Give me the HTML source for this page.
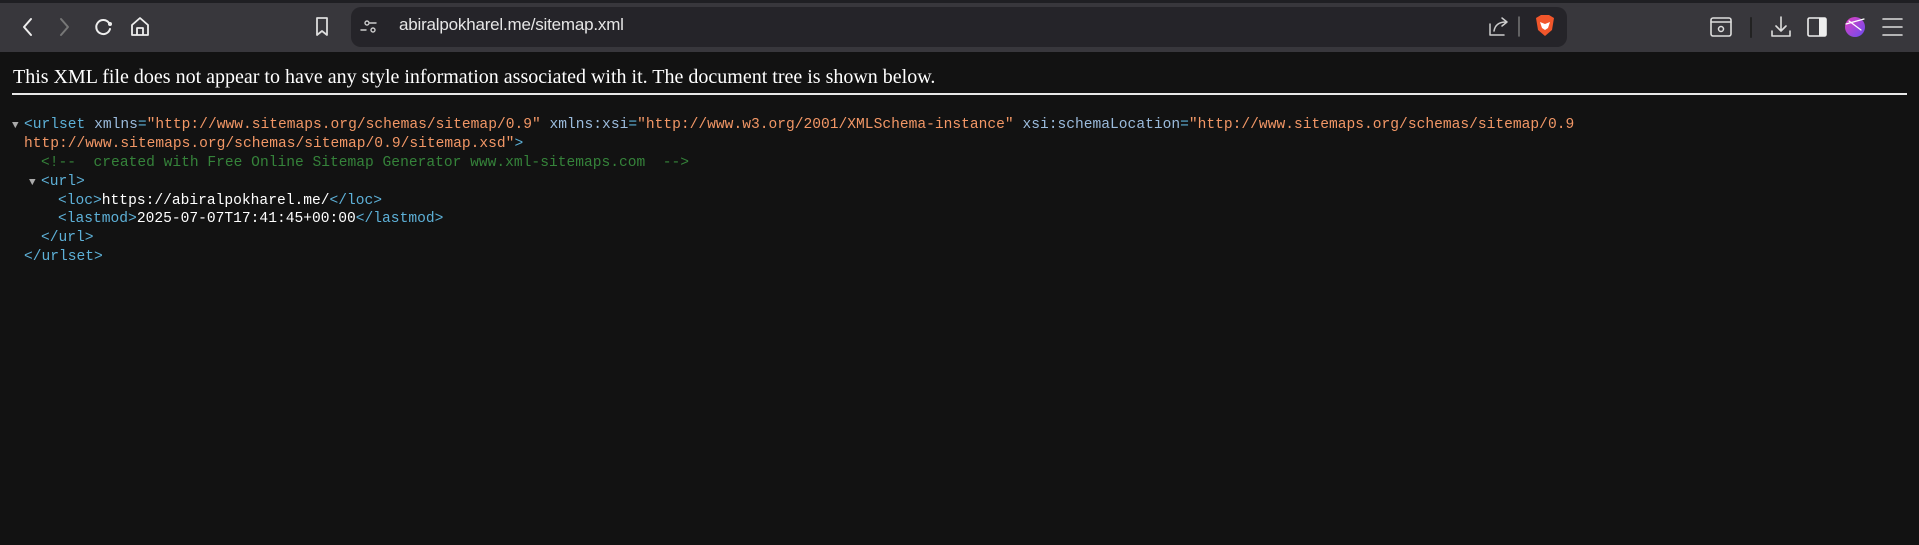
<!DOCTYPE html>
<html><head><meta charset="utf-8"><style>
*{margin:0;padding:0;box-sizing:border-box}
body{width:1919px;height:545px;background:#121212;overflow:hidden;position:relative;font-family:"Liberation Sans",sans-serif}
#top{position:absolute;left:0;top:0;width:1919px;height:3px;background:#1f1f23}
#bar{position:absolute;left:0;top:3px;width:1919px;height:49px;background:#38373c}
#addr{position:absolute;left:351px;top:7px;width:1216px;height:40px;border-radius:10px;background:#252429}
.ic{position:absolute}
#url{position:absolute;left:399px;top:15px;font-size:17px;color:#e6e6e6;letter-spacing:-0.2px}
#msg{position:absolute;left:13px;top:66px;font-family:"Liberation Serif",serif;font-size:20px;color:#fff;white-space:nowrap}
#hr{position:absolute;left:12px;top:93px;width:1895px;height:2px;background:#e8e8e8}
#code{position:absolute;left:0;top:116px;font-family:"Liberation Mono",monospace;font-size:14.6px;line-height:18.9px;color:#fff}
.l{position:relative;height:18.9px;white-space:pre}
.t{color:#5db0d7}.a{color:#9bbbdc}.v{color:#f29766}.c{color:#35833a}
.tri{position:absolute;color:#aaa;font-size:11px}
</style></head><body>
<div id="top"></div><div id="bar"></div><div id="addr"></div>
<svg class="ic" style="left:0;top:0" width="1919" height="52" fill="none" stroke-linecap="round" stroke-linejoin="round">
<path d="M31 19l-7 8 7 8" stroke="#eee" stroke-width="2"/>
<path d="M61 19l7 8-7 8" stroke="#777" stroke-width="2"/>
<path d="M109 23a7 7 0 1 0 1 6" stroke="#eee" stroke-width="2"/><circle cx="110" cy="24" r="2" fill="#eee"/>
<path d="M132 35V25l8-7 8 7v10zM137 35v-7h6v7" stroke="#eee" stroke-width="1.8"/>
<path d="M317 18h10v17l-5-4-5 4z" stroke="#ddd" stroke-width="1.8"/>
<circle cx="367" cy="23" r="2" stroke="#ccc" stroke-width="1.4"/><path d="M370 23h6M366 30h-5" stroke="#ccc" stroke-width="1.4"/><circle cx="373" cy="30" r="2" stroke="#ccc" stroke-width="1.4"/>
<path d="M1490 24v11h14M1494 31c1-6 5-9 12-9M1502 18l5 4-5 4" stroke="#ccc" stroke-width="1.5"/>
<path d="M1519 17v19" stroke="#777" stroke-width="1.5"/>
<path d="M1536 18l5-3h8l5 3-2 12-7 6-7-6z" fill="#f1562b"/><path d="M1540 22l5 2 5-2-2 6-3 2-3-2z" fill="#fff"/>
<rect x="1711" y="18" width="20" height="18" rx="2" stroke="#ddd" stroke-width="1.6"/><path d="M1711 22h20" stroke="#ddd" stroke-width="1.6"/><circle cx="1721" cy="29" r="2.5" stroke="#ddd" stroke-width="1.5"/>
<path d="M1751 18v19" stroke="#222" stroke-width="2"/>
<path d="M1781 17v14M1776 26l5 5 5-5M1772 31v5h18v-5" stroke="#ddd" stroke-width="1.6"/>
<rect x="1808" y="18" width="18" height="18" rx="1.5" stroke="#eee" stroke-width="1.6"/><rect x="1819" y="18" width="7" height="18" fill="#eee"/>
<defs><linearGradient id="g" x1="0" y1="0" x2="1" y2="1"><stop offset="0" stop-color="#e040c0"/><stop offset="1" stop-color="#6a4cf0"/></linearGradient></defs>
<circle cx="1855" cy="27" r="10" fill="url(#g)"/><path d="M1846 24l18-5M1849 21l12 9" stroke="#fff" stroke-width="1.2"/>
<path d="M1883 19h19M1883 27h19M1883 35h19" stroke="#ddd" stroke-width="1.6"/>
</svg>
<div id="url">abiralpokharel.me/sitemap.xml</div>
<div id="msg">This XML file does not appear to have any style information associated with it. The document tree is shown below.</div>
<div id="hr"></div>
<div id="code"><div class="l"><span class="tri" style="left:12px;top:1px">▼</span><span style="position:absolute;left:24px"><span class="t">&lt;urlset</span> <span class="a">xmlns</span><span class="t">=</span><span class="v">"http://www.sitemaps.org/schemas/sitemap/0.9"</span> <span class="a">xmlns:xsi</span><span class="t">=</span><span class="v">"http://www.w3.org/2001/XMLSchema-instance"</span> <span class="a">xsi:schemaLocation</span><span class="t">=</span><span class="v">"http://www.sitemaps.org/schemas/sitemap/0.9</span></span></div><div class="l"><span style="position:absolute;left:24px"><span class="v">http://www.sitemaps.org/schemas/sitemap/0.9/sitemap.xsd"</span><span class="t">&gt;</span></span></div><div class="l"><span class="c" style="position:absolute;left:41px">&lt;!--  created with Free Online Sitemap Generator www.xml-sitemaps.com  --&gt;</span></div><div class="l"><span class="tri" style="left:29px;top:1px">▼</span><span class="t" style="position:absolute;left:41px">&lt;url&gt;</span></div><div class="l"><span style="position:absolute;left:58px"><span class="t">&lt;loc&gt;</span>https://abiralpokharel.me/<span class="t">&lt;/loc&gt;</span></span></div><div class="l"><span style="position:absolute;left:58px"><span class="t">&lt;lastmod&gt;</span>2025-07-07T17:41:45+00:00<span class="t">&lt;/lastmod&gt;</span></span></div><div class="l"><span class="t" style="position:absolute;left:41px">&lt;/url&gt;</span></div><div class="l"><span class="t" style="position:absolute;left:24px">&lt;/urlset&gt;</span></div></div>
</body></html>
